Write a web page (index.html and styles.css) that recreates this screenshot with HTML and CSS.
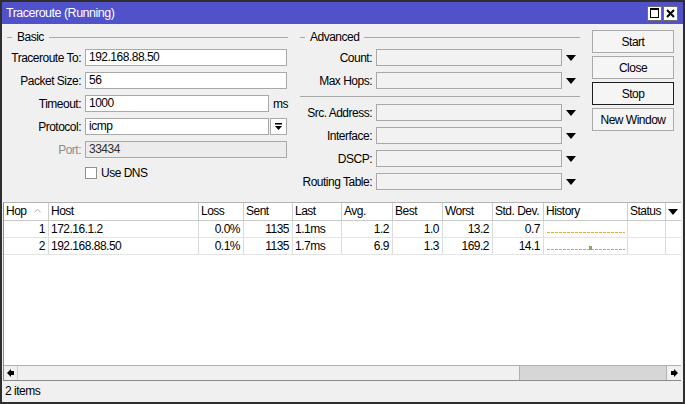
FILE: index.html
```html
<!DOCTYPE html>
<html lang="en">
  <head>
    <meta charset="UTF-8" />
    <title>Traceroute (Running)</title>
    <link rel="stylesheet" href="styles.css">
  </head>
  <body>
    <div class="window">
      <div class="titlebar">
        <span class="title">Traceroute (Running)</span>
        <div class="title-btns">
          <span class="tbtn"><span class="max-box"></span></span>
          <span class="tbtn">
            <svg width="9" height="9" viewBox="0 0 9 9"><path d="M1 1L8 8M8 1L1 8" stroke="#000" stroke-width="2"/></svg>
          </span>
        </div>
      </div>

      <div class="top">
        <div class="group basic">
          <div class="legend"><span>Basic</span></div>
          <div class="rows">
            <div class="row"><label>Traceroute To:</label><div class="field">192.168.88.50</div></div>
            <div class="row"><label>Packet Size:</label><div class="field">56</div></div>
            <div class="row"><label>Timeout:</label><div class="field short">1000</div><span class="unit">ms</span></div>
            <div class="row">
              <label>Protocol:</label><div class="field short">icmp</div>
              <span class="combo-btn">
                <svg width="9" height="9" viewBox="0 0 9 9"><path d="M1 1h7v1.5H1z M1 4h7L4.5 8z"/></svg>
              </span>
            </div>
            <div class="row"><label class="disabled">Port:</label><div class="field off">33434</div></div>
            <div class="row"><label></label><span class="checkbox"></span><span class="check-label">Use DNS</span></div>
          </div>
        </div>

        <div class="group advanced">
          <div class="legend"><span>Advanced</span></div>
          <div class="rows">
            <div class="row"><label>Count:</label><div class="field empty"></div><span class="drop"><svg width="10" height="6"><path d="M0 0h10L5 6z"/></svg></span></div>
            <div class="row"><label>Max Hops:</label><div class="field empty"></div><span class="drop"><svg width="10" height="6"><path d="M0 0h10L5 6z"/></svg></span></div>
            <div class="sep"></div>
            <div class="row"><label>Src. Address:</label><div class="field empty"></div><span class="drop"><svg width="10" height="6"><path d="M0 0h10L5 6z"/></svg></span></div>
            <div class="row"><label>Interface:</label><div class="field empty"></div><span class="drop"><svg width="10" height="6"><path d="M0 0h10L5 6z"/></svg></span></div>
            <div class="row"><label>DSCP:</label><div class="field empty"></div><span class="drop"><svg width="10" height="6"><path d="M0 0h10L5 6z"/></svg></span></div>
            <div class="row"><label>Routing Table:</label><div class="field empty"></div><span class="drop"><svg width="10" height="6"><path d="M0 0h10L5 6z"/></svg></span></div>
          </div>
        </div>

        <div class="buttons">
          <div class="btn">Start</div>
          <div class="btn">Close</div>
          <div class="btn focus">Stop</div>
          <div class="btn">New Window</div>
        </div>
      </div>

      <div class="list">
        <div class="grid head">
          <div class="cell">Hop<svg class="sort" width="7" height="5"><path d="M0.5 4.5L3.5 1L6.5 4.5" fill="none" stroke="#b5b5b5"/></svg></div>
          <div class="cell">Host</div>
          <div class="cell">Loss</div>
          <div class="cell">Sent</div>
          <div class="cell">Last</div>
          <div class="cell">Avg.</div>
          <div class="cell">Best</div>
          <div class="cell">Worst</div>
          <div class="cell">Std. Dev.</div>
          <div class="cell">History</div>
          <div class="cell">Status</div>
          <div class="cell menu"><svg width="10" height="6"><path d="M0 0h10L5 6z"/></svg></div>
        </div>
        <div class="grid item">
          <div class="cell num">1</div>
          <div class="cell">172.16.1.2</div>
          <div class="cell num">0.0%</div>
          <div class="cell num">1135</div>
          <div class="cell">1.1ms</div>
          <div class="cell num">1.2</div>
          <div class="cell num">1.0</div>
          <div class="cell num">13.2</div>
          <div class="cell num">0.7</div>
          <div class="cell history"><span class="trace"></span></div>
          <div class="cell"></div>
          <div class="cell last"></div>
        </div>
        <div class="grid item">
          <div class="cell num">2</div>
          <div class="cell">192.168.88.50</div>
          <div class="cell num">0.1%</div>
          <div class="cell num">1135</div>
          <div class="cell">1.7ms</div>
          <div class="cell num">6.9</div>
          <div class="cell num">1.3</div>
          <div class="cell num">169.2</div>
          <div class="cell num">14.1</div>
          <div class="cell history"><span class="trace"></span><span class="bar" style="left: 45px"></span></div>
          <div class="cell"></div>
          <div class="cell last"></div>
        </div>
        <div class="filler"></div>
        <div class="hscroll">
          <span class="arrow-btn"><svg width="7" height="8"><path d="M0 4L4 0V8z M4 2h3v4H4z"/></svg></span>
          <span class="track"></span>
          <span class="thumb"></span>
          <span class="arrow-btn right"><svg width="7" height="8"><path d="M7 4L3 0V8z M0 2h3v4H0z"/></svg></span>
        </div>
      </div>

      <div class="statusbar">2 items</div>
    </div>
  </body>
</html>
```

FILE: styles.css
```css
body {
  margin: 0;
  font-family: "Liberation Sans", Arial, sans-serif;
  font-size: 12px;
  letter-spacing: -0.5px;
  color: #000;
  background: #fff;
}
.window {
  width: 685px;
  height: 404px;
  box-sizing: border-box;
  border: 2px solid #2e2e2e;
  background: #f0f0f0;
  display: flex;
  flex-direction: column;
  overflow: hidden;
}

/* title bar */
.titlebar {
  height: 22px;
  flex: none;
  background: #5151c9;
  color: #fff;
  font-size: 12.5px;
  display: flex;
  align-items: center;
  justify-content: space-between;
  padding: 0 5px 0 4px;
}
.title-btns {
  display: flex;
  gap: 1px;
}
.tbtn {
  width: 13px;
  height: 13px;
  background: #fff;
  border: 1px solid #707070;
  display: flex;
  align-items: center;
  justify-content: center;
}
.max-box {
  width: 7px;
  height: 7px;
  border: 1px solid #000;
  border-top-width: 2px;
}

/* form area */
.top {
  height: 178px;
  flex: none;
  box-sizing: border-box;
  display: flex;
  gap: 12px;
  padding: 6px 0 0 5px;
}
.group {
  width: 281px;
}
.advanced {
  width: 280px;
}
.legend {
  display: flex;
  align-items: center;
  gap: 5px;
  height: 14px;
  margin-bottom: 5px;
}
.legend::before {
  content: "";
  width: 5px;
  border-top: 1px solid #a8a8a8;
}
.legend::after {
  content: "";
  flex: 1;
  border-top: 1px solid #a8a8a8;
}
.rows {
  display: flex;
  flex-direction: column;
  gap: 6px;
}
.row {
  display: flex;
  align-items: center;
  height: 17px;
}
.row label {
  width: 74px;
  margin-right: 4px;
  text-align: right;
  white-space: nowrap;
  flex: none;
}
.advanced .row label {
  width: 72px;
}
.row label.disabled {
  color: #8c8c8c;
}
.field {
  width: 202px;
  height: 17px;
  box-sizing: border-box;
  border: 1px solid #a9a9a9;
  background: #fff;
  padding: 0 3px;
  line-height: 15px;
  white-space: nowrap;
}
.field.short {
  width: 184px;
}
.field.off {
  background: #ececec;
  color: #303030;
}
.field.empty {
  width: 186px;
  background: #f2f2f2;
}
.unit {
  margin-left: 4px;
}
.combo-btn {
  width: 17px;
  height: 17px;
  box-sizing: border-box;
  margin-left: 1px;
  border: 1px solid #a9a9a9;
  background: #fff;
  display: flex;
  align-items: center;
  justify-content: center;
}
.drop {
  width: 18px;
  display: flex;
  justify-content: center;
}
.sep {
  height: 1px;
  margin: 1px 0;
  background: #a8a8a8;
}
.checkbox {
  width: 12px;
  height: 12px;
  box-sizing: border-box;
  border: 1px solid #8f8f8f;
  background: #fff;
}
.check-label {
  margin-left: 4px;
}

/* buttons */
.buttons {
  width: 82px;
  display: flex;
  flex-direction: column;
  gap: 3px;
}
.btn {
  height: 23px;
  box-sizing: border-box;
  border: 1px solid #a9a9a9;
  background: #f5f5f5;
  display: flex;
  align-items: center;
  justify-content: center;
}
.btn.focus {
  border-color: #1e1e1e;
}

/* list */
.list {
  flex: 1;
  display: flex;
  flex-direction: column;
  margin: 0 2px 0 1px;
  background: #fff;
  border-left: 1px solid #8c8c8c;
  border-top: 1px solid #b4b4b4;
}
.grid {
  display: grid;
  grid-template-columns: 45px 150px 45px 49px 49px 51px 50px 50px 51px 84px 38px 1fr;
}
.head {
  height: 18px;
  box-sizing: border-box;
  border-bottom: 1px solid #c8c8c8;
}
.item {
  height: 17px;
  box-sizing: border-box;
  border-bottom: 1px solid #e4e4e4;
}
.cell {
  position: relative;
  border-right: 1px solid #dcdcdc;
  padding: 0 3px 0 2px;
  white-space: nowrap;
  overflow: hidden;
  line-height: 16px;
}
.head .cell {
  line-height: 17px;
  border-right-color: #cdcdcd;
}
.cell.num {
  text-align: right;
}
.cell.last,
.cell.menu {
  border-right: none;
}
.cell.menu {
  display: flex;
  align-items: center;
  justify-content: center;
}
.sort {
  position: absolute;
  right: 7px;
  top: 5px;
}
.trace {
  position: absolute;
  left: 3px;
  right: 2px;
  bottom: 4px;
  height: 1px;
  background: repeating-linear-gradient(to right, #dcaa3c 0 3px, transparent 3px 4px);
}
.bar {
  position: absolute;
  bottom: 4px;
  width: 3px;
  height: 4px;
  background: #86ad5e;
}
.filler {
  flex: 1;
}
.hscroll {
  height: 16px;
  box-sizing: border-box;
  display: flex;
  background: #f0f0f0;
  border-top: 1px solid #b0b0b0;
  border-bottom: 1px solid #8c8c8c;
}
.arrow-btn {
  width: 13px;
  display: flex;
  align-items: center;
  justify-content: center;
  border-right: 1px solid #d0d0d0;
}
.arrow-btn.right {
  width: 14px;
  border-right: none;
  border-left: 1px solid #b0b0b0;
}
.track {
  width: 501px;
}
.thumb {
  flex: 1;
  background: #d6d6d6;
  border-left: 1px solid #b0b0b0;
}

/* status bar */
.statusbar {
  height: 21px;
  flex: none;
  box-sizing: border-box;
  padding: 0 3px;
  line-height: 20px;
}
```
